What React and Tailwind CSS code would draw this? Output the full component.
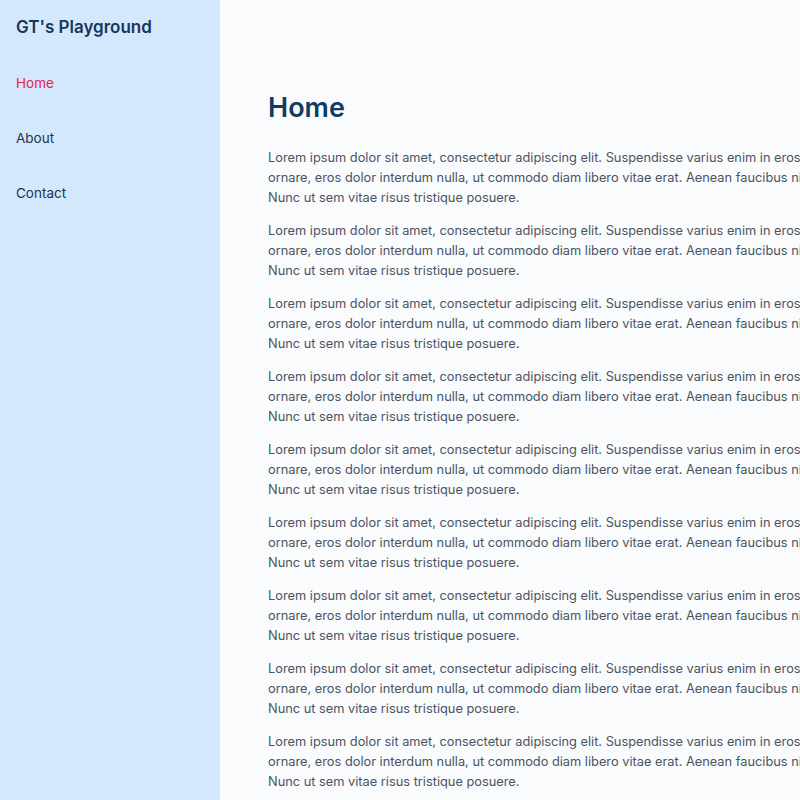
import React from "react";

const lorem =
  "Lorem ipsum dolor sit amet, consectetur adipiscing elit. Suspendisse varius enim in eros elementum tristique. Duis cursus, mi quis viverra ornare, eros dolor interdum nulla, ut commodo diam libero vitae erat. Aenean faucibus nibh et justo cursus id rutrum lorem imperdiet. Nunc ut sem vitae risus tristique posuere.";

function Sidebar() {
  const links = ["Home", "About", "Contact"];
  return (
    <aside className="w-[220px] shrink-0 bg-[#d3e8fc] px-4">
      <div className="h-[56px] flex items-center">
        <span className="text-[17px] font-semibold text-[#16375a]">GT's Playground</span>
      </div>
      <nav className="flex flex-col">
        {links.map((l, i) => (
          <a
            key={l}
            href="#"
            className={`h-[55px] flex items-center text-[13.5px] ${i === 0 ? "text-[#e0264a]" : "text-[#1b3553]"}`}
          >
            {l}
          </a>
        ))}
      </nav>
    </aside>
  );
}

export default function App() {
  return (
    <div className="flex w-[800px] h-[800px] overflow-hidden font-['Inter',sans-serif]">
      <Sidebar />
      <main className="flex-1 bg-[#fafbfc] pl-12 pt-[89px]">
        <h1 className="text-[27px] leading-[38px] font-semibold text-[#133b62] mb-[21px]">Home</h1>
        <div className="flex flex-col gap-[13px] w-[834px]">
          {Array.from({ length: 9 }).map((_, i) => (
            <p key={i} className="text-[12.8px] leading-[20px] text-[#4a5463]">
              {lorem}
            </p>
          ))}
        </div>
      </main>
    </div>
  );
}
